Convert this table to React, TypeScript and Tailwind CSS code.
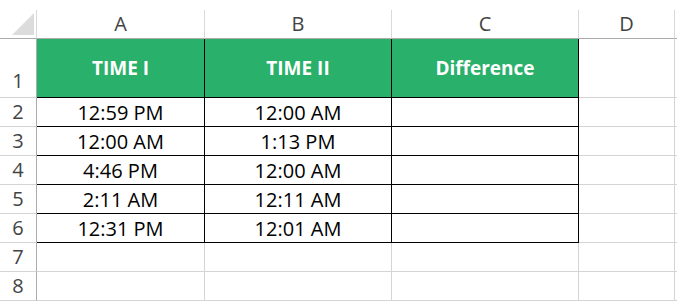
import React from 'react'

const cols = ['A', 'B', 'C', 'D']

const rows = [
  ['12:59 PM', '12:00 AM'],
  ['12:00 AM', '1:13 PM'],
  ['4:46 PM', '12:00 AM'],
  ['2:11 AM', '12:11 AM'],
  ['12:31 PM', '12:01 AM'],
]

const font = { fontFamily: '"Open Sans", "Noto Sans", sans-serif' }

function RowHead({ n, tall }: { n: number; tall?: boolean }) {
  return (
    <div className={`flex justify-center border-r border-b border-r-[#ababab] border-b-[#d4d4d4] text-[20px] text-[#444] ${tall ? 'items-end pb-[1px]' : 'items-center'}`}>
      {n}
    </div>
  )
}

export default function App() {
  return (
    <div className="w-[677px] h-[304px] bg-white overflow-hidden pt-[10px]" style={font}>
      <div className="grid grid-cols-[37px_168px_187px_187px_96px_1fr] grid-rows-[29px_59px_29px_29px_29px_29px_29px_29px_29px]">
        {/* column headers */}
        <div className="relative border-r border-b border-r-[#d9d9d9] border-b-[#ababab]">
          <svg className="absolute left-[12px] top-[3px]" width="22" height="22" viewBox="0 0 22 22">
            <polygon points="22,0 22,22 0,22" fill="#dcdcdc" />
          </svg>
        </div>
        {cols.map(c => (
          <div key={c} className="flex items-end justify-center pb-[1px] border-r border-b border-r-[#d9d9d9] border-b-[#ababab] text-[20px] leading-[26px] text-[#444]">
            {c}
          </div>
        ))}
        <div className="border-b border-b-[#ababab]" />

        {/* row 1 */}
        <RowHead n={1} tall />
        {['TIME I', 'TIME II', 'Difference'].map(h => (
          <div key={h} className="flex items-center justify-center bg-[#29b06a] border-r border-b border-black text-[19px] font-bold text-white">
            {h}
          </div>
        ))}
        <div className="border-r border-b border-[#d4d4d4]" />
        <div className="border-b border-[#d4d4d4]" />

        {/* data rows */}
        {rows.map((r, i) => (
          <React.Fragment key={i}>
            <RowHead n={i + 2} />
            <div className="flex items-center justify-center pt-[1px] border-r border-b border-black text-[20px] text-black">{r[0]}</div>
            <div className="flex items-center justify-center pt-[1px] border-r border-b border-black text-[20px] text-black">{r[1]}</div>
            <div className="border-r border-b border-black" />
            <div className="border-r border-b border-[#d4d4d4]" />
            <div className="border-b border-[#d4d4d4]" />
          </React.Fragment>
        ))}

        {/* empty rows */}
        {[7, 8].map(n => (
          <React.Fragment key={n}>
            <RowHead n={n} />
            <div className="border-r border-b border-[#d4d4d4]" />
            <div className="border-r border-b border-[#d4d4d4]" />
            <div className="border-r border-b border-[#d4d4d4]" />
            <div className="border-r border-b border-[#d4d4d4]" />
            <div className="border-b border-[#d4d4d4]" />
          </React.Fragment>
        ))}
      </div>
    </div>
  )
}
